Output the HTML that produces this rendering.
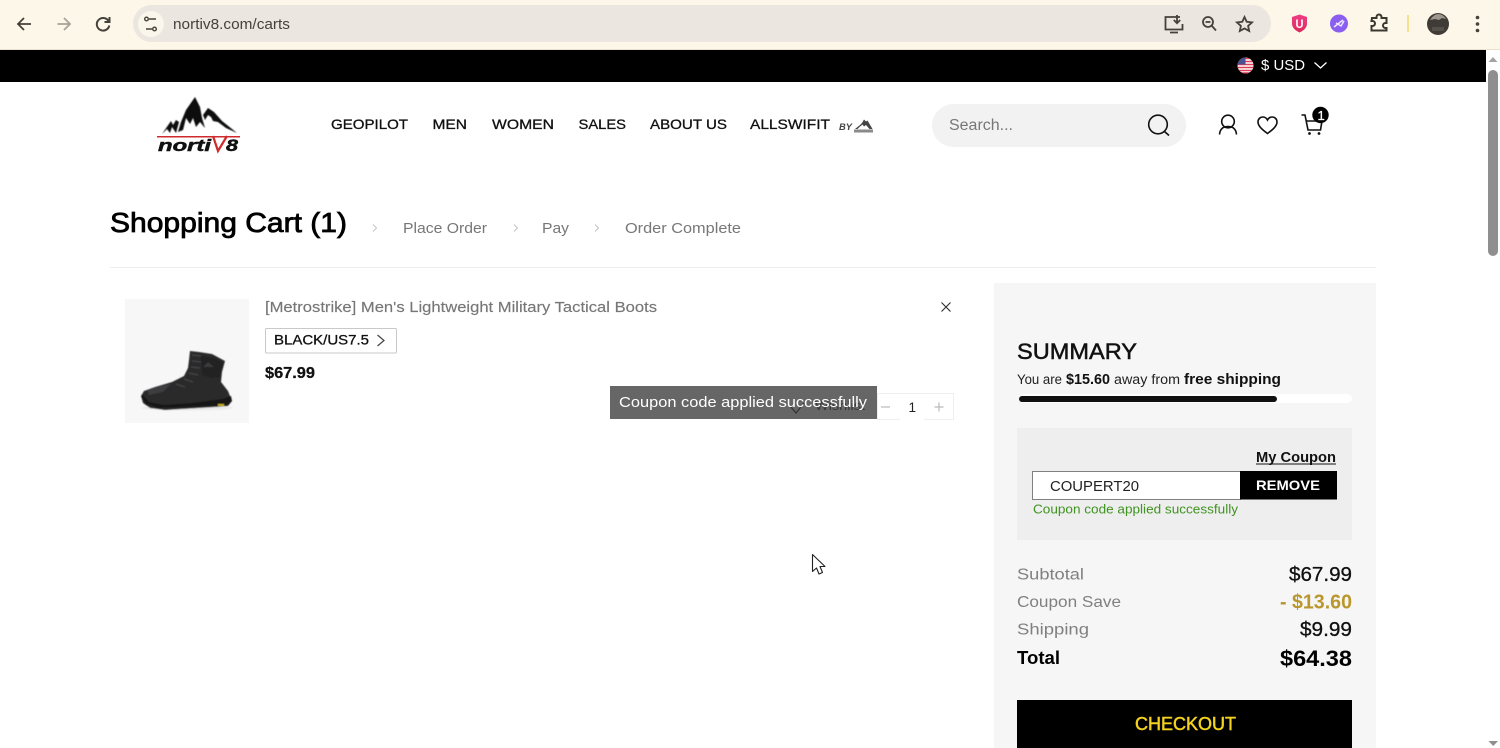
<!DOCTYPE html>
<html lang="en">
<head>
<meta charset="utf-8">
<title>Shopping Cart</title>
<style>
html,body{margin:0;padding:0;background:#fff;width:1500px;height:748px;overflow:hidden}
svg{display:block;position:absolute;left:0;top:0}
text{font-family:"Liberation Sans",sans-serif;white-space:pre}
.m{stroke-width:.3px}
</style>
</head>
<body>
<svg width="1500" height="748" viewBox="0 0 1500 748" xmlns="http://www.w3.org/2000/svg">
<defs>
<filter id="soft" x="-5%" y="-5%" width="110%" height="110%"><feGaussianBlur stdDeviation=".45"/></filter>
<linearGradient id="shield" x1="0" y1="0" x2="0" y2="1"><stop offset="0" stop-color="#ee3f85"/><stop offset="1" stop-color="#dc2a5e"/></linearGradient>
</defs>
<!-- Browser chrome -->
<rect width="1500" height="50" fill="#fdf7e9"/>
<rect y="49" width="1500" height="1" fill="#e8dfcd"/>
<rect x="133" y="5" width="1138" height="37" rx="18.500" fill="#ebe6df"/>
<circle cx="151" cy="24" r="13" fill="#fbf6ec"/>
<g fill="none" stroke="#45423b" stroke-width="1.800">
  <path d="M31 24H18.500M24 18l-6 6 6 6"/>
  <path d="M70 24H57.500M64 18l6 6-6 6" stroke="#a5a297"/>
  <path d="M108.500 21A6.300 6.300 0 1 0 109.300 25.500" stroke-width="2"/>
  <path d="M109.500 17v5h-5" stroke-width="2"/>
  <path d="M149 19h7M146 29h6" stroke-width="1.600"/>
  <circle cx="146.500" cy="19" r="1.800" stroke-width="1.400"/>
  <circle cx="154.500" cy="29" r="1.800" stroke-width="1.400"/>
  <path d="M1180 17h-14.500v12.500h17V24"/><path d="M1170 32.500h8M1177 15v8M1173.800 20l3.200 3.200 3.200-3.200"/>
  <circle cx="1208" cy="22" r="5"/><path d="M1211.500 25.500l4.500 5M1205.500 22h5"/>
  <path d="M1244.500 17l2.200 4.800 5.300.6-3.900 3.500 1.100 5.100-4.700-2.600-4.700 2.600 1.100-5.100-3.900-3.500 5.300-.6z"/>
  <path d="M1372 18h4.500v-1a2.500 2.500 0 0 1 5 0v1h5v5h-1a2.500 2.500 0 0 0 0 5h1v2.500h-15v-4.500h1a2.500 2.500 0 0 0 0-5h-1z" stroke="#3a382f" stroke-width="2"/>
</g>
<path d="M1299.500 14.500l7.500 2.500v6.500c0 4.500-3.500 7-7.500 9-4-2-7.500-4.500-7.500-9V17z" fill="url(#shield)"/>
<text x="1295.500" y="28" font-size="12" font-weight="700" fill="#fff" textLength="8" lengthAdjust="spacingAndGlyphs">U</text>
<circle cx="1339" cy="23.500" r="9" fill="#8a5ff0"/>
<path d="M1334 27l9-7M1336 23l5 3 3-5" stroke="#efe7ff" stroke-width="1.500" fill="none"/>
<rect x="1407" y="15" width="2" height="17" fill="#f7e08c"/>
<circle cx="1438" cy="24" r="11" fill="#3f3c37"/>
<path d="M1430 20q4-6 8-6 5 0 8 5l-4-1-3 2-4-1z" fill="#9d978e"/>
<path d="M1432 27h12v4h-12z" fill="#55504a"/>
<circle cx="1477.500" cy="17.500" r="1.800" fill="#45423b"/><circle cx="1477.500" cy="24" r="1.800" fill="#45423b"/><circle cx="1477.500" cy="30.500" r="1.800" fill="#45423b"/>
<text x="173" y="29" font-size="15" fill="#45423b" textLength="117" lengthAdjust="spacingAndGlyphs">nortiv8.com/carts</text>

<!-- Top bar -->
<rect y="50" width="1486" height="32" fill="#000"/>
<clipPath id="flag"><circle cx="1245.500" cy="65.500" r="8"/></clipPath>
<g clip-path="url(#flag)">
  <rect x="1237" y="57" width="17" height="17" fill="#fff"/>
  <path d="M1237 58.500h17M1237 61.500h17M1237 64.500h17M1237 67.500h17M1237 70.500h17M1237 73h17" stroke="#df3d54" stroke-width="1.500"/>
  <rect x="1237" y="57" width="8.500" height="7.500" fill="#4a4f8e"/>
</g>
<text x="1261" y="70" font-size="15" fill="#fff" textLength="44" lengthAdjust="spacingAndGlyphs">$ USD</text>
<path d="M1314.500 62.500l6 5.500 6-5.500" fill="none" stroke="#fff" stroke-width="1.300"/>

<!-- Scrollbar -->
<rect x="1486" y="50" width="14" height="698" fill="#fff"/>
<path d="M1488.500 62l4.500-5 4.500 5z" fill="#a3a3a3"/>
<rect x="1488" y="70" width="10" height="186" rx="5" fill="#8f8f8f"/>
<path d="M1488.500 741h9.500l-4.750 5z" fill="#8f8f8f"/>

<!-- Logo -->
<g fill="#0a0a0a" filter="url(#soft)">
  <path d="M195 97l5 10 2 11 3 10-5-6-4 5-3-9-3 6-4-6-3 12-5 2 3-10 5-12z"/>
  <path d="M162 134l9-13 2 4 3-5 3 2-3 11-4-6-2 6-3-4z"/>
  <path d="M203 115l5-7 6 4 8 9 15 12-11-5-8-6-5-1-2-4-3-2-3 5z"/>
</g>
<rect x="157" y="136" width="83" height="1.500" fill="#cf2a2c"/>
<path d="M213 136l5 15 9-15" fill="none" stroke="#cf2a2c" stroke-width="2.200"/>
<text x="158" y="151" font-size="17" font-weight="700" font-style="italic" fill="#111" stroke="#111" stroke-width=".5" textLength="53" lengthAdjust="spacingAndGlyphs">norti</text>
<text x="226" y="151" font-size="17" font-weight="700" font-style="italic" fill="#111" stroke="#111" stroke-width=".5" textLength="12" lengthAdjust="spacingAndGlyphs">8</text>

<!-- Nav -->
<g font-size="14" fill="#111" stroke="#111" class="m">
  <text x="331" y="129" textLength="77" lengthAdjust="spacingAndGlyphs">GEOPILOT</text>
  <text x="432.500" y="129" textLength="34.500" lengthAdjust="spacingAndGlyphs">MEN</text>
  <text x="492" y="129" textLength="62" lengthAdjust="spacingAndGlyphs">WOMEN</text>
  <text x="578.500" y="129" textLength="47.500" lengthAdjust="spacingAndGlyphs">SALES</text>
  <text x="650" y="129" textLength="77" lengthAdjust="spacingAndGlyphs">ABOUT US</text>
  <text x="750" y="129" textLength="80" lengthAdjust="spacingAndGlyphs">ALLSWIFIT</text>
</g>
<text x="839" y="130" font-size="9.500" font-weight="700" font-style="italic" fill="#444" textLength="13" lengthAdjust="spacingAndGlyphs">BY</text>
<path d="M855 129l5-4 2-2 2-3.500 2 2 1.500-1 5 8.500h-3l-3.500-4-2 1.500-1.500-2-3 2.500-2 2z" fill="#444"/>
<rect x="854" y="129.500" width="19" height="3" fill="#8a8a8a"/>

<!-- Search -->
<rect x="932" y="104" width="254" height="43" rx="21.500" fill="#f2f2f2"/>
<text x="949" y="130" font-size="15.500" fill="#777" textLength="64" lengthAdjust="spacingAndGlyphs">Search...</text>
<g fill="none" stroke="#111" stroke-width="1.600">
  <circle cx="1158" cy="124.500" r="9.300"/><path d="M1164.500 131.500l4.500 4"/>
  <circle cx="1228" cy="121.500" r="6.300"/><path d="M1219.500 134.500c.5-5.500 3.500-8 8.500-8s8 2.500 8.500 8"/>
  <path d="M1267.500 133.500c-4-3-9.500-7-9.500-11.500 0-3 2.200-5 4.800-5 2 0 3.700 1 4.700 3 1-2 2.700-3 4.700-3 2.600 0 4.800 2 4.800 5 0 4.500-5.500 8.500-9.500 11.500z"/>
  <path d="M1301.500 115h3.500l3 15h12.500l1.500-9h-16"/>
</g>
<circle cx="1309.500" cy="133.500" r="1.400" fill="#111"/><circle cx="1319" cy="133.500" r="1.400" fill="#111"/>
<circle cx="1320.500" cy="115" r="8.200" fill="#000"/>
<text x="1317.500" y="120" font-size="13" fill="#fff" stroke="#fff" class="m">1</text>

<!-- Heading -->
<text x="110" y="232" font-size="28" fill="#000" stroke="#000" stroke-width=".8" textLength="237" lengthAdjust="spacingAndGlyphs">Shopping Cart (1)</text>
<g fill="none" stroke="#c4c4c4" stroke-width="1">
  <path d="M373 224.500l3.500 3.500-3.500 3.500M514 224.500l3.500 3.500-3.500 3.500M595 224.500l3.500 3.500-3.500 3.500"/>
</g>
<g font-size="15" fill="#777">
  <text x="403" y="233" textLength="84" lengthAdjust="spacingAndGlyphs">Place Order</text>
  <text x="542" y="233" textLength="27" lengthAdjust="spacingAndGlyphs">Pay</text>
  <text x="625" y="233" textLength="116" lengthAdjust="spacingAndGlyphs">Order Complete</text>
</g>
<rect x="110" y="267" width="1266" height="1" fill="#eeeeee"/>

<!-- Product -->
<rect x="125" y="299" width="124" height="124" fill="#f7f7f7"/>
<g filter="url(#soft)">
  <ellipse cx="187" cy="408" rx="46" ry="2.500" fill="#ebebeb"/>
  <path d="M190 351L199 352L212 354L225 361L222 372L221 382L228 391L232 401L228 406L215 407L165 410L150 408L143 403L141 396L144 391L155 387L172 382L184 376L188 368L189 360Z" fill="#2a2a2c"/>
  <path d="M141 396l5 8 13 4 30-1 38-2 5-4-1-5-9 3-30 4-28 2-15-3-6-7z" fill="#161617"/>
  <path d="M147 390l12-4 12-2-8 8-14 3z" fill="#3d3d3f"/>
  <path d="M201 356l13 2 9 5-3 14-8 1-10-3z" fill="#222224"/>
  <path d="M208 362l6 5h-11z" fill="#3a3a3c"/>
  <path d="M192 355l9 1M192 361l9 1M191 367l9 1M189 373l9 2M184 379l9 3M176 384l9 3" stroke="#4a4a4c" stroke-width="1.100" fill="none"/>
  <rect x="218" y="404" width="6" height="2" fill="#c4ab24"/>
</g>
<text x="265" y="312" font-size="14.500" fill="#777" stroke="#777" stroke-width=".15" textLength="392" lengthAdjust="spacingAndGlyphs">[Metrostrike] Men's Lightweight Military Tactical Boots</text>
<rect x="265.500" y="328.500" width="131" height="24.500" rx="1" fill="#fff" stroke="#c9c9c9"/>
<text x="274" y="344.500" font-size="14" fill="#111" stroke="#111" class="m" textLength="95" lengthAdjust="spacingAndGlyphs">BLACK/US7.5</text>
<path d="M377.500 335l6.500 5.500-6.500 5.500" fill="none" stroke="#444" stroke-width="1.200"/>
<text x="265" y="378" font-size="15.500" font-weight="700" fill="#111" stroke="#111" stroke-width=".25" textLength="50" lengthAdjust="spacingAndGlyphs">$67.99</text>
<path d="M941.500 302.500l9 9M950.500 302.500l-9 9" stroke="#333" stroke-width="1.200" fill="none"/>

<!-- Quantity -->
<rect x="877.500" y="393.500" width="76" height="26" fill="#fff" stroke="#efefef"/>
<rect x="900" y="418" width="24" height="3" fill="#fff"/>
<path d="M881 407h9" stroke="#bbb" stroke-width="1.200"/>
<text x="908.500" y="412" font-size="13.500" fill="#222">1</text>
<path d="M934.500 407h9M939 402.500v9" stroke="#bbb" stroke-width="1.200"/>

<!-- Toast -->
<rect x="610" y="386" width="267" height="33" fill="#666666"/>
<path d="M790 406l6 7 8-10" fill="none" stroke="#333" stroke-width="1.200"/>
<text x="815" y="410" font-size="13" fill="#3a3a3a" textLength="50" lengthAdjust="spacingAndGlyphs">Wishlist</text>
<text x="619" y="407" font-size="15" fill="#fff" textLength="248" lengthAdjust="spacingAndGlyphs">Coupon code applied successfully</text>

<!-- Summary -->
<rect x="994" y="283" width="382" height="465" fill="#f6f6f6"/>
<text x="1017" y="359" font-size="22.500" fill="#111" stroke="#111" stroke-width=".5" textLength="120" lengthAdjust="spacingAndGlyphs">SUMMARY</text>
<text x="1017" y="384" font-size="13.500" fill="#222" textLength="45" lengthAdjust="spacingAndGlyphs">You are</text>
<text x="1066" y="384" font-size="14.500" font-weight="700" fill="#111" textLength="44" lengthAdjust="spacingAndGlyphs">$15.60</text>
<text x="1114" y="384" font-size="13.500" fill="#222" textLength="66" lengthAdjust="spacingAndGlyphs">away from</text>
<text x="1184" y="384" font-size="14.500" font-weight="700" fill="#111" textLength="97" lengthAdjust="spacingAndGlyphs">free shipping</text>
<rect x="1019" y="394" width="333" height="9" rx="4.500" fill="#fff"/>
<rect x="1019" y="396" width="258" height="6" rx="3" fill="#111"/>

<rect x="1017" y="428" width="335" height="112" fill="#eeeeee"/>
<text x="1256" y="462" font-size="14.500" font-weight="700" fill="#111" textLength="80" lengthAdjust="spacingAndGlyphs">My Coupon</text>
<rect x="1256" y="463.500" width="80" height="1" fill="#111"/>
<rect x="1032.500" y="471.500" width="208" height="28" fill="#fff" stroke="#808080"/>
<rect x="1240" y="471" width="97" height="28.500" fill="#000"/>
<text x="1050" y="491" font-size="14.500" fill="#222" textLength="89" lengthAdjust="spacingAndGlyphs">COUPERT20</text>
<text x="1256" y="490" font-size="14" font-weight="700" fill="#fff" textLength="64" lengthAdjust="spacingAndGlyphs">REMOVE</text>
<text x="1033" y="513.500" font-size="12.500" fill="#3f9320" textLength="205" lengthAdjust="spacingAndGlyphs">Coupon code applied successfully</text>

<g font-size="15.500" fill="#808080">
  <text x="1017" y="579.500" textLength="67" lengthAdjust="spacingAndGlyphs">Subtotal</text>
  <text x="1017" y="607" textLength="104" lengthAdjust="spacingAndGlyphs">Coupon Save</text>
  <text x="1017" y="634.500" textLength="72" lengthAdjust="spacingAndGlyphs">Shipping</text>
</g>
<text x="1289" y="581" font-size="20" fill="#111" stroke="#111" class="m" textLength="63" lengthAdjust="spacingAndGlyphs">$67.99</text>
<text x="1280" y="608.500" font-size="20" font-weight="700" fill="#b9972d" textLength="72" lengthAdjust="spacingAndGlyphs">- $13.60</text>
<text x="1300" y="636" font-size="20" fill="#111" stroke="#111" class="m" textLength="52" lengthAdjust="spacingAndGlyphs">$9.99</text>
<text x="1017" y="664" font-size="18" font-weight="700" fill="#000" textLength="43" lengthAdjust="spacingAndGlyphs">Total</text>
<text x="1280" y="666" font-size="22.500" font-weight="700" fill="#000" textLength="72" lengthAdjust="spacingAndGlyphs">$64.38</text>
<rect x="1017" y="700" width="335" height="48" fill="#000"/>
<text x="1135" y="730" font-size="18.500" fill="#f4d21f" stroke="#f4d21f" stroke-width=".5" textLength="101" lengthAdjust="spacingAndGlyphs">CHECKOUT</text>

<!-- Cursor -->
<path d="M812.500 554.500v17l4-3.500 2.500 6 3.500-1.500-2.500-6h5z" fill="#fff" stroke="#222" stroke-width="1.100" stroke-linejoin="round"/>
</svg>
</body>
</html>
